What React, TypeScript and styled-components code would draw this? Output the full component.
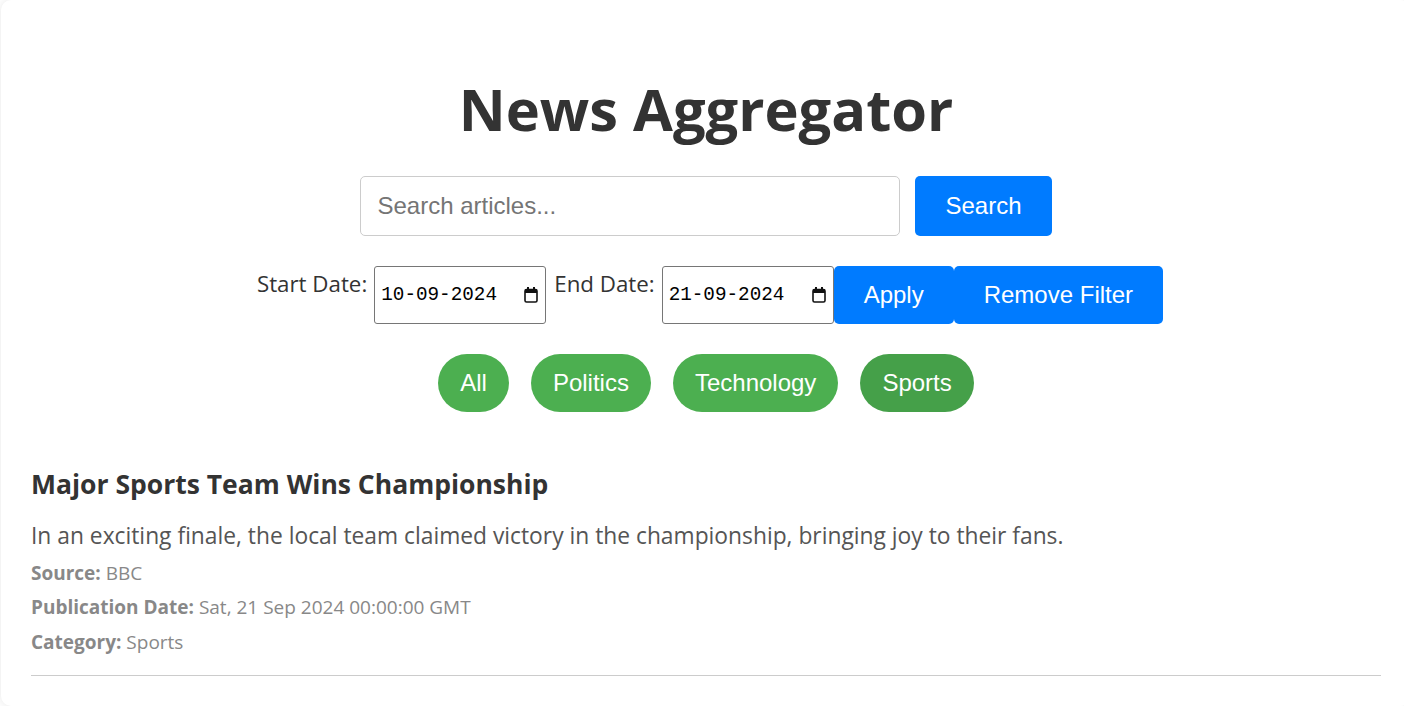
import React from "react";
import styled, { createGlobalStyle, css } from "styled-components";

const GlobalStyle = createGlobalStyle`
  html, body {
    margin: 0;
    padding: 0;
    background: #ffffff;
    overflow: hidden;
  }
  body {
    font-family: "Open Sans", "Noto Sans", sans-serif;
    color: #333;
  }
  * { box-sizing: border-box; }
`;

const Card = styled.div`
  width: 1410px;
  margin-left: 1px;
  padding: 30px 30px 30px;
  background: #fff;
  border-radius: 10px;
  box-shadow: 0 0 10px rgba(0, 0, 0, 0.1);
`;

const Title = styled.h1`
  margin: 44px 0 32px;
  font-size: 57.8px;
  line-height: 70px;
  font-weight: 700;
  text-align: center;
  color: #333;
`;

const SearchRow = styled.form`
  display: flex;
  justify-content: center;
  align-items: stretch;
  gap: 15px;
`;

const SearchInput = styled.input`
  width: 540px;
  height: 60px;
  padding: 0 16px;
  border: 1px solid #ccc;
  border-radius: 5px;
  font-family: "Liberation Sans", Arial, sans-serif;
  font-size: 24px;
  color: #333;
  outline: none;
  &::placeholder { color: #757575; }
`;

const buttonBase = css`
  border: none;
  border-radius: 5px;
  background: #007bff;
  color: #fff;
  font-family: "Liberation Sans", Arial, sans-serif;
  font-size: 24px;
  padding: 0 30px;
  cursor: pointer;
`;

const BlueButton = styled.button<{ $h: number }>`
  ${buttonBase};
  height: ${(p) => p.$h}px;
`;

const DateRow = styled.div`
  display: flex;
  justify-content: center;
  align-items: flex-start;
  margin-top: 30px;
`;

const DateLabel = styled.label`
  margin: 0 7px 0 8px;
  font-size: 22.3px;
  line-height: 30px;
  padding-top: 3px;
  color: #333;
`;

const DateField = styled.div`
  display: flex;
  align-items: center;
  justify-content: space-between;
  width: 172px;
  height: 58px;
  padding: 0 7px 0 6px;
  border: 1px solid #767676;
  border-radius: 3px;
  background: #fff;
  font-family: "Liberation Mono", "DejaVu Sans Mono", monospace;
  font-size: 19.3px;
  color: #000;
`;

const Categories = styled.div`
  display: flex;
  justify-content: center;
  gap: 22px;
  margin-top: 30px;
`;

const Pill = styled.button<{ $active?: boolean }>`
  border: none;
  border-radius: 30px;
  padding: 15px 22px;
  font-family: "Liberation Sans", Arial, sans-serif;
  font-size: 24px;
  line-height: 27.6px;
  color: #fff;
  background: ${(p) => (p.$active ? "#45a049" : "#4caf50")};
  cursor: pointer;
`;

const ArticleList = styled.div`
  margin-top: 35px;
`;

const Article = styled.article`
  padding: 20px 0 13px;
  border-bottom: 1px solid #ccc;
`;

const ArticleTitle = styled.h2`
  margin: 0;
  font-size: 26.5px;
  line-height: 35.5px;
  font-weight: 700;
  color: #333;
`;

const Description = styled.p`
  margin: 18px 0 0;
  font-size: 22.8px;
  line-height: 32px;
  color: #555;
`;

const Meta = styled.p`
  margin: 6.5px 0;
  font-size: 19px;
  line-height: 28px;
  color: #888;
  strong { font-weight: 700; }
`;

const CalendarIcon = () => (
  <svg width="14" height="16" viewBox="0 0 14 16" aria-hidden="true">
    <rect x="3" y="0" width="2" height="3" fill="#111" />
    <rect x="9" y="0" width="2" height="3" fill="#111" />
    <rect x="1" y="2.5" width="12" height="12.5" rx="1.5" fill="none" stroke="#111" strokeWidth="1.6" />
    <rect x="1" y="2.5" width="12" height="3.5" fill="#111" />
  </svg>
);

const categories = ["All", "Politics", "Technology", "Sports"];

export default function App() {
  return (
    <>
      <GlobalStyle />
      <Card>
        <Title>News Aggregator</Title>
        <SearchRow onSubmit={(e) => e.preventDefault()}>
          <SearchInput type="text" placeholder="Search articles..." />
          <BlueButton $h={60} type="submit">Search</BlueButton>
        </SearchRow>
        <DateRow>
          <DateLabel>Start Date:</DateLabel>
          <DateField>
            <span>10-09-2024</span>
            <CalendarIcon />
          </DateField>
          <DateLabel>End Date:</DateLabel>
          <DateField>
            <span>21-09-2024</span>
            <CalendarIcon />
          </DateField>
          <BlueButton $h={58}>Apply</BlueButton>
          <BlueButton $h={58}>Remove Filter</BlueButton>
        </DateRow>
        <Categories>
          {categories.map((c) => (
            <Pill key={c} $active={c === "Sports"}>{c}</Pill>
          ))}
        </Categories>
        <ArticleList>
          <Article>
            <ArticleTitle>Major Sports Team Wins Championship</ArticleTitle>
            <Description>
              In an exciting finale, the local team claimed victory in the championship, bringing joy to their fans.
            </Description>
            <Meta><strong>Source:</strong> BBC</Meta>
            <Meta><strong>Publication Date:</strong> Sat, 21 Sep 2024 00:00:00 GMT</Meta>
            <Meta><strong>Category:</strong> Sports</Meta>
          </Article>
        </ArticleList>
      </Card>
    </>
  );
}
